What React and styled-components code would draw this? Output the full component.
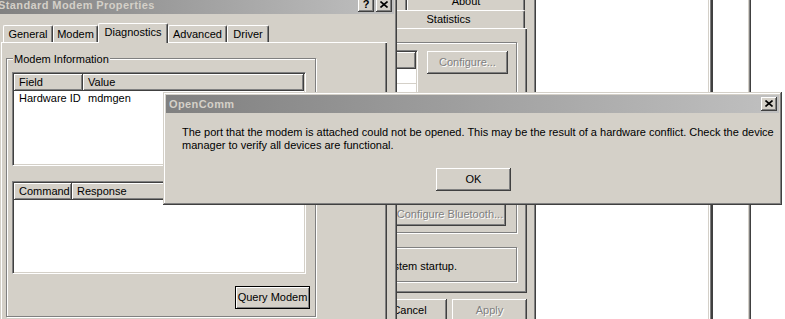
import React from "react"
import styled, { createGlobalStyle } from "styled-components"

const uiFont = `Tahoma, "Liberation Sans", Arial, sans-serif`

const GlobalStyle = createGlobalStyle`
  html, body {
    margin: 0;
    padding: 0;
    background: #fff;
  }
  body {
    font-family: ${uiFont};
    font-size: 11px;
    line-height: 13px;
    color: #000;
  }
`

const Desktop = styled.div`
  position: relative;
  width: 785px;
  height: 319px;
  overflow: hidden;
  background: #fff;
`

// edges of windows further back on the desktop
const Edge = styled.div`
  position: absolute;
  top: 0;
  bottom: 0;
  left: ${p => p.$x}px;
  width: ${p => p.$w}px;
  background: ${p => p.$fill};
`

const Window = styled.div`
  position: absolute;
  z-index: ${p => p.$z};
  left: ${p => p.$x}px;
  top: ${p => p.$y}px;
  width: ${p => p.$w}px;
  height: ${p => p.$h}px;
  box-sizing: border-box;
  padding: 3px;
  background: #d4d0c8;
  box-shadow: inset -1px -1px #404040, inset 1px 1px #d4d0c8,
    inset -2px -2px #808080, inset 2px 2px #fff;
  display: flex;
  flex-direction: column;
`

const TitleBar = styled.div`
  flex: none;
  height: 18px;
  display: flex;
  align-items: center;
  gap: 2px;
  padding: 0 2px 0 3px;
  background: linear-gradient(to right, #808080, #c0c0c0);
  color: #d4d0c8;
  font-weight: bold;
  letter-spacing: 0.4px;
`

const TitleText = styled.span`
  flex: 1;
  white-space: nowrap;
  overflow: hidden;
`

const CaptionButton = styled.div`
  flex: none;
  width: 16px;
  height: 14px;
  box-sizing: border-box;
  background: #d4d0c8;
  box-shadow: inset -1px -1px #404040, inset 1px 1px #fff,
    inset -2px -2px #808080;
  display: flex;
  align-items: center;
  justify-content: center;
  color: #000;
  font-weight: bold;
  letter-spacing: 0;
  font-size: 11px;
  padding-bottom: 1px;
`

const Body = styled.div`
  flex: 1;
  display: flex;
  flex-direction: column;
  min-height: 0;
  padding: ${p => p.$pad};
`

const TabRow = styled.div`
  flex: none;
  display: flex;
  align-items: flex-end;
  justify-content: ${p => (p.$end ? "flex-end" : "flex-start")};
  height: ${p => p.$h}px;
  padding: 0 ${p => p.$pr || 0}px 0 ${p => p.$pl || 0}px;
`

const Tab = styled.div`
  position: relative;
  z-index: ${p => (p.$active ? 1 : 0)};
  flex: none;
  box-sizing: border-box;
  width: ${p => p.$w}px;
  height: ${p => (p.$active ? 20 : p.$h || 17)}px;
  margin-bottom: ${p => (p.$active ? -1 : 0)}px;
  background: #d4d0c8;
  border-top: 1px solid #fff;
  border-left: 1px solid #fff;
  border-right: 1px solid #404040;
  border-radius: 2px 2px 0 0;
  box-shadow: inset -1px 0 #808080;
  display: flex;
  align-items: center;
  justify-content: center;
  white-space: nowrap;
  padding-bottom: ${p => (p.$active ? 2 : 0)}px;
`

const TabPanel = styled.div`
  flex: ${p => (p.$h ? "none" : 1)};
  height: ${p => (p.$h ? `${p.$h}px` : "auto")};
  box-sizing: border-box;
  display: flex;
  flex-direction: column;
  padding: ${p => p.$pad};
  background: #d4d0c8;
  box-shadow: inset 1px 1px #fff, inset -1px -1px #404040,
    inset -2px -2px #808080;
`

const GroupBox = styled.div`
  flex: none;
  box-sizing: border-box;
  width: ${p => (p.$w ? `${p.$w}px` : "auto")};
  height: ${p => p.$h}px;
  margin-top: ${p => p.$mt || 0}px;
  padding: ${p => p.$pad};
  border: 1px solid #808080;
  box-shadow: inset 1px 1px #fff, 1px 1px #fff;
  display: flex;
  flex-direction: column;
  text-align: ${p => p.$align || "left"};
`

const GroupLabel = styled.div`
  align-self: flex-start;
  margin: -6px 0 0 6px;
  padding: 0 1px;
  background: #d4d0c8;
  white-space: nowrap;
`

const ListView = styled.div`
  flex: ${p => (p.$grow ? 1 : "none")};
  box-sizing: border-box;
  height: ${p => p.$h}px;
  margin: ${p => p.$m || 0};
  background: #fff;
  border-top: 1px solid #808080;
  border-left: 1px solid #808080;
  border-bottom: 1px solid #fff;
  border-right: 1px solid #fff;
  box-shadow: inset 1px 1px #404040, inset -1px -1px #d4d0c8;
  padding: 1px;
  display: flex;
  flex-direction: column;
  overflow: hidden;
`

const HeaderRow = styled.div`
  flex: none;
  display: flex;
  height: 17px;
`

const HeaderCell = styled.div`
  box-sizing: border-box;
  flex: ${p => (p.$w ? "none" : 1)};
  width: ${p => (p.$w ? `${p.$w}px` : "auto")};
  background: #d4d0c8;
  box-shadow: inset -1px -1px #404040, inset 1px 1px #fff,
    inset -2px -2px #808080;
  padding: 0 0 1px 5px;
  display: flex;
  align-items: center;
  white-space: nowrap;
`

const Row = styled.div`
  flex: none;
  display: flex;
  align-items: center;
  height: ${p => (p.$grid ? 15 : 14)}px;
  box-sizing: border-box;
  border-bottom: ${p => (p.$grid ? "1px solid #d4d0c8" : "none")};
  padding-top: 1px;
`

const Cell = styled.div`
  flex: ${p => (p.$w ? "none" : 1)};
  width: ${p => (p.$w ? `${p.$w}px` : "auto")};
  box-sizing: border-box;
  padding-left: 5px;
  white-space: nowrap;
`

const Button = styled.div`
  flex: none;
  box-sizing: border-box;
  width: ${p => p.$w || 75}px;
  height: 23px;
  margin: ${p => p.$m || 0};
  align-self: ${p => p.$self || "auto"};
  background: #d4d0c8;
  border: ${p => (p.$default ? "1px solid #000" : "none")};
  box-shadow: ${p =>
    p.$default
      ? "inset 1px 1px #fff, inset -1px -1px #808080"
      : "inset -1px -1px #404040, inset 1px 1px #fff, inset -2px -2px #808080"};
  display: flex;
  align-items: center;
  justify-content: center;
  white-space: nowrap;
  color: ${p => (p.$disabled ? "#808080" : "#000")};
  text-shadow: ${p => (p.$disabled ? "1px 1px 0 #fff" : "none")};
`

const ButtonRow = styled.div`
  flex: none;
  display: flex;
  justify-content: flex-end;
  gap: 5px;
  margin-top: 6px;
`

const TopRow = styled.div`
  flex: none;
  display: flex;
  align-items: flex-start;
`

const Message = styled.div`
  align-self: flex-start;
  white-space: nowrap;
  margin-left: 16px;
`

const CloseGlyph = () => (
  <svg width="8" height="7" viewBox="0 0 8 7">
    <path d="M0.5 0.5 L7.5 6.5 M7.5 0.5 L0.5 6.5" stroke="#000" strokeWidth="1.6" fill="none" />
  </svg>
)

const BluetoothWindow = () => (
  <Window $z={1} $x={236} $y={-40} $w={300} $h={380}>
    <TitleBar>
      <TitleText>Bluetooth Configuration</TitleText>
      <CaptionButton><CloseGlyph /></CaptionButton>
    </TitleBar>
    <Body $pad="11px 6px 0 6px">
      <TabRow $end $h={18} $pr={2}>
        <Tab $w={100} $h={18}>Hardware</Tab>
        <Tab $w={118} $h={18}>About</Tab>
      </TabRow>
      <TabRow $end $h={18} $pr={2}>
        <Tab $w={100} $h={18}>Local Services</Tab>
        <Tab $w={153} $h={18}>Statistics</Tab>
      </TabRow>
      <TabPanel $h={265} $pad="14px 10px 11px 7px">
        <GroupBox $h={191} $pad="7px 8px 6px 8px">
          <TopRow>
            <ListView $grow $h={146}>
              <HeaderRow>
                <HeaderCell>Device</HeaderCell>
              </HeaderRow>
              <Row $grid />
              <Row $grid />
            </ListView>
            <Button $disabled $w={81} $m="1px 0 0 9px">Configure...</Button>
          </TopRow>
          <Button $disabled $w={112} $self="flex-end" $m="7px 2px 0 0">
            Configure Bluetooth...
          </Button>
        </GroupBox>
        <GroupBox $h={35} $mt={14} $pad="12px 59px 0 8px" $align="right">
          <span>Start on system startup.</span>
        </GroupBox>
      </TabPanel>
      <ButtonRow>
        <Button>OK</Button>
        <Button>Cancel</Button>
        <Button $disabled>Apply</Button>
      </ButtonRow>
    </Body>
  </Window>
)

const ModemWindow = () => (
  <Window $z={2} $x={-8} $y={-7} $w={405} $h={340}>
    <TitleBar>
      <TitleText>Standard Modem Properties</TitleText>
      <CaptionButton>?</CaptionButton>
      <CaptionButton><CloseGlyph /></CaptionButton>
    </TitleBar>
    <Body $pad="9px 7px 0 6px">
      <TabRow $h={19} $pl={2}>
        <Tab $w={50}>General</Tab>
        <Tab $w={45}>Modem</Tab>
        <Tab $w={70} $active>Diagnostics</Tab>
        <Tab $w={59}>Advanced</Tab>
        <Tab $w={42}>Driver</Tab>
      </TabRow>
      <TabPanel $pad="16px 0 0 5px">
        <GroupBox $w={310} $h={259} $pad="0">
          <GroupLabel>Modem Information</GroupLabel>
          <ListView $h={94} $m="6px 9px 0 5px">
            <HeaderRow>
              <HeaderCell $w={69}>Field</HeaderCell>
              <HeaderCell>Value</HeaderCell>
            </HeaderRow>
            <Row>
              <Cell $w={69}>Hardware ID</Cell>
              <Cell>mdmgen</Cell>
            </Row>
          </ListView>
          <ListView $h={93} $m="15px 9px 0 5px">
            <HeaderRow>
              <HeaderCell $w={58}>Command</HeaderCell>
              <HeaderCell>Response</HeaderCell>
            </HeaderRow>
          </ListView>
          <Button $default $self="flex-end" $m="12px 5px 0 0">Query Modem</Button>
        </GroupBox>
      </TabPanel>
    </Body>
  </Window>
)

const ErrorDialog = () => (
  <Window $z={3} $x={163} $y={92} $w={619} $h={113}>
    <TitleBar>
      <TitleText>OpenComm</TitleText>
      <CaptionButton><CloseGlyph /></CaptionButton>
    </TitleBar>
    <Body $pad="13px 0 0 0">
      <Message>
        The port that the modem is attached could not be opened. This may be the result of a hardware conflict. Check the device
        <br />
        manager to verify all devices are functional.
      </Message>
      <Button $self="center" $m="16px 0 0 2px">OK</Button>
    </Body>
  </Window>
)

export default function App() {
  return (
    <>
      <GlobalStyle />
      <Desktop>
        <Edge
          $x={708}
          $w={5}
          $fill="linear-gradient(to right, #d4d0c8 0 1px, #fff 1px 2px, #808080 2px 3px, #404040 3px 5px)"
        />
        <Edge
          $x={748}
          $w={3}
          $fill="linear-gradient(to right, #d4d0c8 0 1px, #808080 1px 2px, #404040 2px 3px)"
        />
        <BluetoothWindow />
        <ModemWindow />
        <ErrorDialog />
      </Desktop>
    </>
  )
}
